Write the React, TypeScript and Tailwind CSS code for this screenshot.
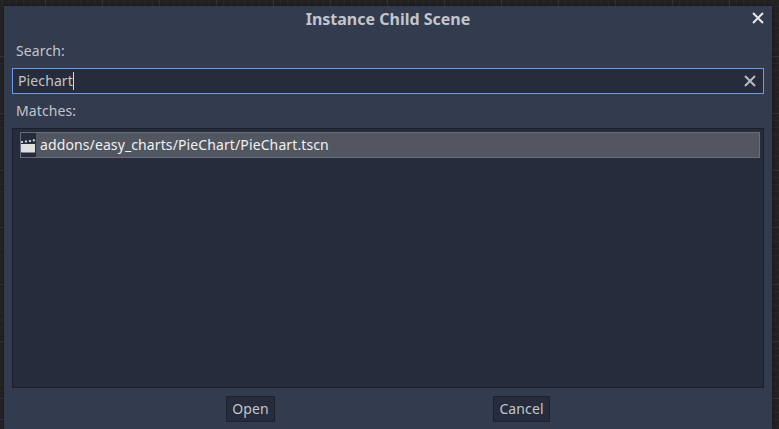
const Cross = ({ className }: { className: string }) => (
  <svg className={className} viewBox="0 0 12 12" fill="none" stroke="currentColor" strokeWidth="2">
    <path d="M1 1 11 11M11 1 1 11" />
  </svg>
);

const SceneIcon = () => (
  <svg className="h-6 w-[15px] shrink-0 bg-[#262c3b]" viewBox="0 0 15 24">
    <path d="M0 11H14V19Q14 19.5 13.5 19.5H.8Q0 19.5 0 18.8Z" fill="#e0e0e0" />
    <path d="M0 9.2 14 7.2" stroke="#e0e0e0" strokeWidth="1.8" strokeDasharray="2 2" />
  </svg>
);

const Grid = () => (
  <svg className="absolute inset-0 h-full w-full" shapeRendering="crispEdges">
    <defs>
      <pattern id="minor" x="2" y="6" width="7.125" height="7.125" patternUnits="userSpaceOnUse">
        <path d="M0 .5H7.125M.5 0V7.125" stroke="#2b2b2b" />
      </pattern>
      <pattern id="major" x="45" y="56" width="57" height="57" patternUnits="userSpaceOnUse">
        <path d="M0 .5H57M.5 0V57" stroke="#343434" />
      </pattern>
    </defs>
    <rect width="779" height="429" fill="url(#minor)" />
    <rect width="779" height="429" fill="url(#major)" />
    <path d="M729.5 0V6M0 419H4" stroke="#37304f" />
  </svg>
);

const buttonStyle =
  "h-[26px] border border-[#1e2230] bg-[#262c3b] text-center leading-[24px] tracking-[0.1px]";

export default function App() {
  return (
    <div className="relative h-[429px] w-[779px] overflow-hidden bg-[#222222] pt-1.5 pr-[7px] pl-1 font-['Noto_Sans','Open_Sans',sans-serif] text-[14px] tracking-[0.11px] text-[#c2c5cb]">
      <Grid />
      <div className="relative flex h-[423px] flex-col bg-[#333b4f] px-2 shadow-[0_0_4px_#00000080]">
        <header className="relative flex h-[34px] shrink-0 justify-center">
          <h1 className="h-[26px] text-[16px] leading-[26px] font-bold tracking-normal">Instance Child Scene</h1>
          <button aria-label="Close" className="absolute top-1.5 right-0 text-[#e8e9ec]">
            <Cross className="h-3 w-3" />
          </button>
        </header>
        <label className="h-7 shrink-0 pl-1 leading-[22px]">Search:</label>
        <div className="flex h-[26px] shrink-0 items-center border border-[#699ce8] bg-[#262c3b] pr-[7px] pl-[5px]">
          <span className="leading-6">Piechart</span>
          <span className="h-[18px] w-px bg-[#d5d8de]" />
          <Cross className="ml-auto h-3 w-3 text-[#b9bbc3]" />
        </div>
        <div className="h-[34px] shrink-0 pl-1 leading-[34px]">Matches:</div>
        <div className="h-[260px] shrink-0 border border-[#1b1f2c] bg-[#262c3b] pt-[3px] pr-[3px] pl-[7px]">
          <div className="flex h-[26px] items-center border border-[#686c7a] bg-[#525660] text-[#f0f1f2]">
            <SceneIcon />
            <span className="pl-1 leading-6">addons/easy_charts/PieChart/PieChart.tscn</span>
          </div>
        </div>
        <footer className="flex shrink-0 pt-2 pl-[214px]">
          <button className={`${buttonStyle} w-[49px]`}>Open</button>
          <button className={`${buttonStyle} ml-[218px] w-[57px]`}>Cancel</button>
        </footer>
      </div>
    </div>
  );
}
